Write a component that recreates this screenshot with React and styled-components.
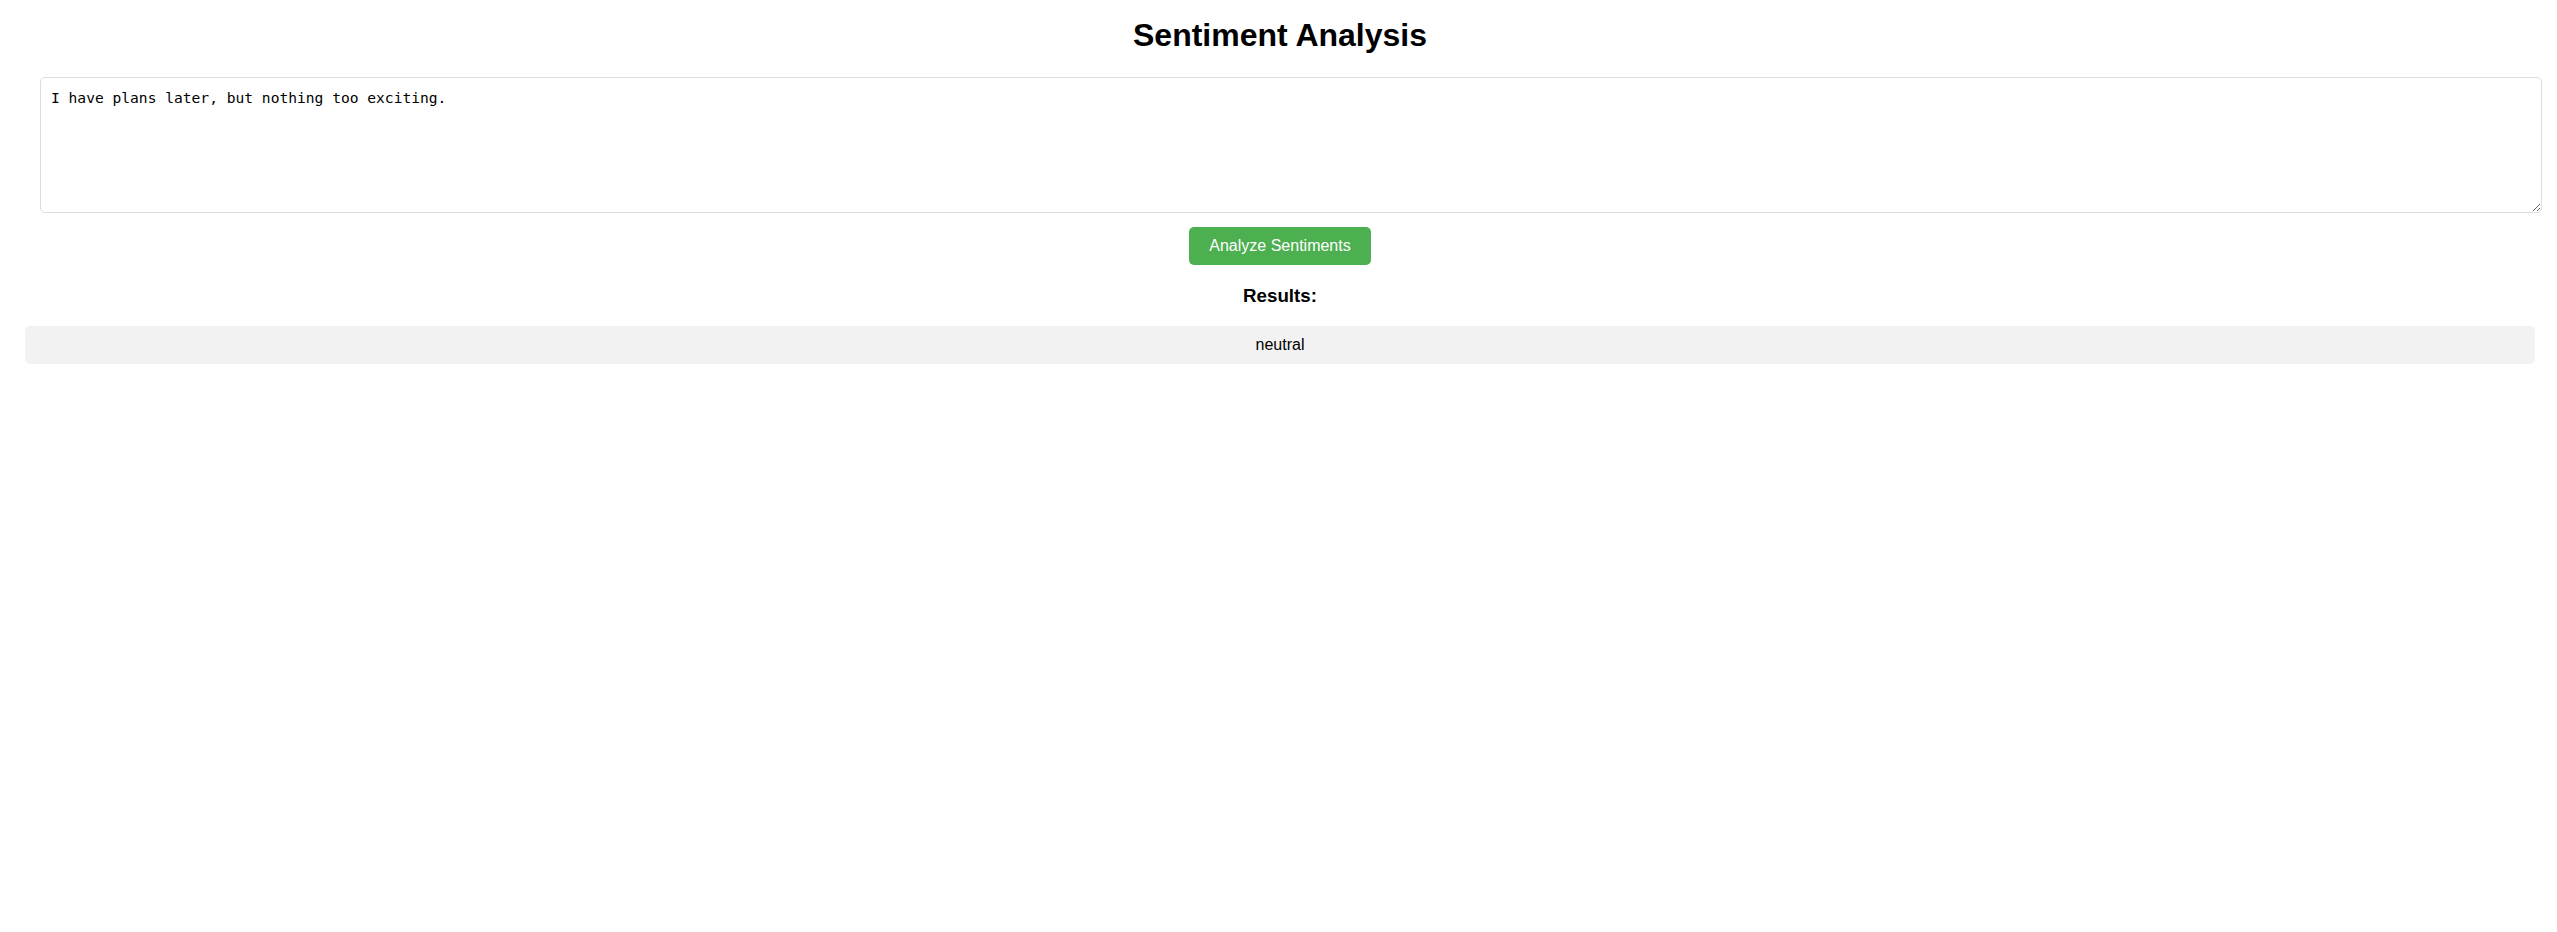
// Sentiment Analysis page

import React, { useState } from 'react';
import styled, { createGlobalStyle } from 'styled-components';

const GlobalStyle = createGlobalStyle`
  body {
    margin: 0;
    background: #fff;
    color: #000;
    font-family: "Liberation Sans", Arial, sans-serif;
  }
`;

const Page = styled.main`
  padding: 0 22px 0 25px;
`;

const Title = styled.h1`
  margin: 17px 0 23px;
  font-size: 32px;
  line-height: 37px;
  font-weight: bold;
  text-align: center;
`;

const TextInput = styled.textarea`
  display: block;
  box-sizing: border-box;
  width: calc(100% - 8px);
  height: 136px;
  margin: 0 0 14px 15px;
  padding: 11px 10px 10px;
  border: 1px solid #dcdcdc;
  border-radius: 5px;
  font-family: "DejaVu Sans Mono", "Liberation Mono", monospace;
  font-size: 14.6px;
  line-height: 17px;
  color: #000;
  outline: none;
`;

const ButtonRow = styled.div`
  display: flex;
  justify-content: center;
`;

const AnalyzeButton = styled.button`
  padding: 10px 20px;
  border: none;
  border-radius: 5px;
  background-color: #4caf50;
  color: #fff;
  font-family: "Liberation Sans", Arial, sans-serif;
  font-size: 16px;
  line-height: 18px;
  cursor: pointer;

  &:hover {
    background-color: #45a049;
  }
`;

const ResultsTitle = styled.h3`
  margin: 20px 0 19px;
  font-size: 18.72px;
  line-height: 22px;
  font-weight: bold;
  text-align: center;
`;

const ResultList = styled.div`
  display: flex;
  flex-direction: column;
  gap: 10px;
`;

const ResultItem = styled.div`
  padding: 10px;
  border-radius: 5px;
  background-color: #f2f2f2;
  font-size: 16px;
  line-height: 18px;
  text-align: center;
`;

function App() {
  const [text, setText] = useState('I have plans later, but nothing too exciting.');
  const [results, setResults] = useState(['neutral']);

  const analyze = () => {
    // pretend analysis, one result per line
    const lines = text.split('\n').filter((l) => l.trim());
    setResults(lines.map(() => 'neutral'));
  };

  return (
    <Page>
      <GlobalStyle />
      <Title>Sentiment Analysis</Title>
      <TextInput value={text} onChange={(e) => setText(e.target.value)} />
      <ButtonRow>
        <AnalyzeButton onClick={analyze}>Analyze Sentiments</AnalyzeButton>
      </ButtonRow>
      <ResultsTitle>Results:</ResultsTitle>
      <ResultList>
        {results.map((r, i) => (
          <ResultItem key={i}>{r}</ResultItem>
        ))}
      </ResultList>
    </Page>
  );
}

export default App;
